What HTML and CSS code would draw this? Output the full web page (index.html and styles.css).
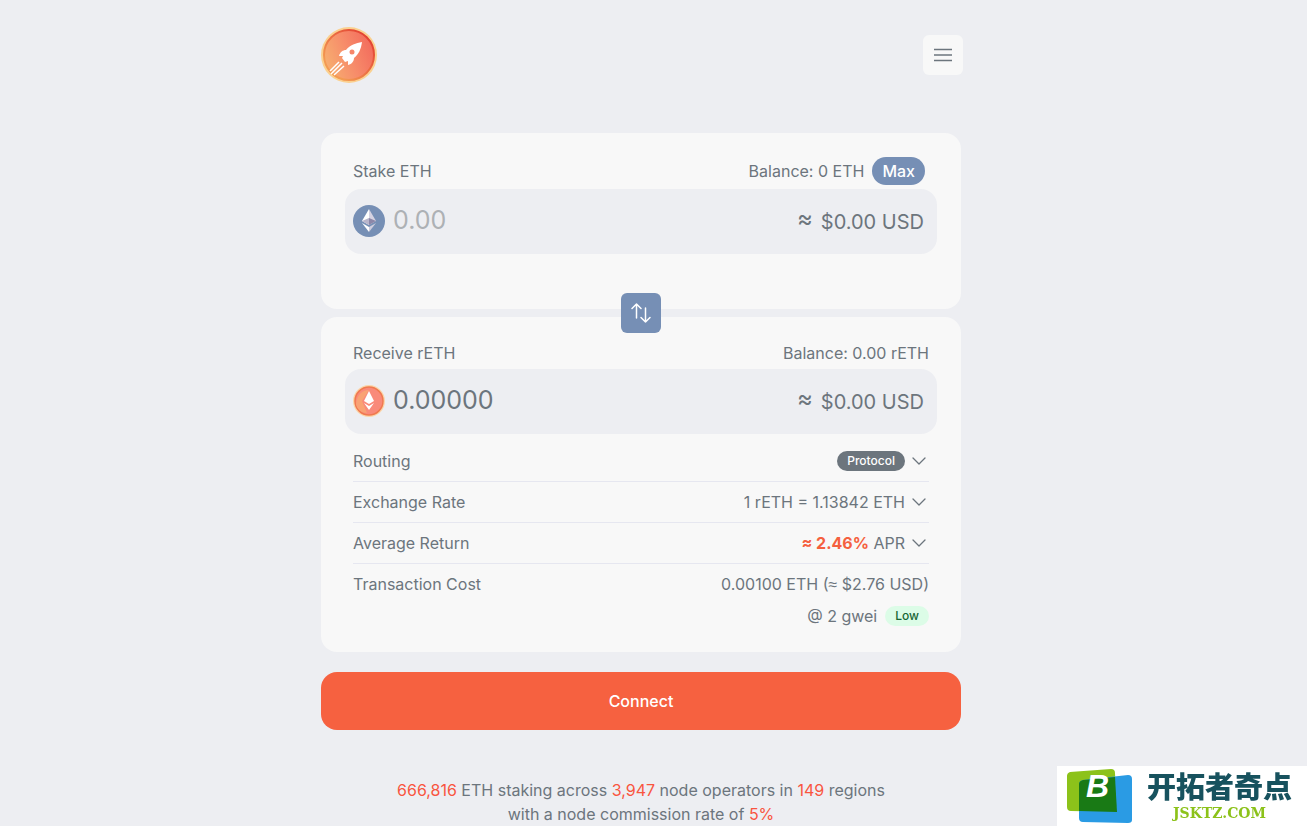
FILE: index.html
```html
<!DOCTYPE html>
<html lang="en">
<head>
    <meta charset="UTF-8">
    <meta name="viewport" content="width=device-width, initial-scale=1.0">
    <title>Stake ETH</title>
    <link rel="stylesheet" href="styles.css">
</head>
<body>
    <div class="page">
        <header class="header">
            <a href="#" class="logo" aria-label="Home">
                <svg width="56" height="56" viewBox="0 0 56 56">
                    <defs>
                        <linearGradient id="logo-fill" x1="0" y1="0.7" x2="1" y2="0.3">
                            <stop offset="0" stop-color="#f7b070"/>
                            <stop offset="0.5" stop-color="#f78c6a"/>
                            <stop offset="1" stop-color="#f26a5c"/>
                        </linearGradient>
                        <linearGradient id="logo-edge" x1="0" y1="1" x2="1" y2="0">
                            <stop offset="0.2" stop-color="#f39a52"/>
                            <stop offset="1" stop-color="#e0302c"/>
                        </linearGradient>
                    </defs>
                    <circle cx="28" cy="28" r="28" fill="#fbd08f"/>
                    <circle cx="28" cy="28" r="25" fill="url(#logo-fill)" stroke="url(#logo-edge)" stroke-width="2"/>
                    <path d="M41 15C35 16 29 18 25 23C22 23 19 25 18 29L22 29L21 31L24 35L27 34L27 38C31 37 33 34 33 31C38 27 40 22 41 15Z" fill="#fff"/>
                    <circle cx="31" cy="25" r="2.500" fill="#f6866a"/>
                    <path d="M18 35L9 44M21 36L10 47M23 39L13 48" stroke="#fff" stroke-width="1.500"/>
                </svg>
            </a>
            <button class="menu-button" aria-label="Menu">
                <svg width="20" height="20" viewBox="0 0 20 20" fill="none" stroke="#6c757d" stroke-width="1.500">
                    <path d="M1 4.500H19M1 10H19M1 15.500H19"/>
                </svg>
            </button>
        </header>

        <main>
            <div class="cards">
                <section class="card stake-card">
                    <div class="card-header">
                        <label for="stake">Stake ETH</label>
                        <div class="balance">
                            <span>Balance: 0 ETH</span>
                            <button class="max-button">Max</button>
                        </div>
                    </div>
                    <div class="amount-box">
                        <svg width="32" height="32" viewBox="0 0 32 32">
                            <circle cx="16" cy="16" r="16" fill="#768fb5"/>
                            <path d="M16 4L9 16L16 20Z" fill="#fff"/>
                            <path d="M16 4L23 16L16 20Z" fill="#d5d3e2"/>
                            <path d="M16 13L9 16L16 20Z" fill="#b9b5cb"/>
                            <path d="M16 13L23 16L16 20Z" fill="#8d87a8"/>
                            <path d="M9 18L16 22V27Z" fill="#fff"/>
                            <path d="M23 18L16 22V27Z" fill="#cfcddd"/>
                        </svg>
                        <input type="text" id="stake" class="amount-input" placeholder="0.00">
                        <span class="usd"><span class="usd-approx">≈</span> <span>$0.00 USD</span></span>
                    </div>
                </section>

                <section class="card">
                    <div class="card-header">
                        <label for="receive">Receive rETH</label>
                        <span>Balance: 0.00 rETH</span>
                    </div>
                    <div class="amount-box">
                        <svg width="32" height="32" viewBox="0 0 32 32">
                            <circle cx="16" cy="16" r="16" fill="#fbd5a8"/>
                            <circle cx="16" cy="16" r="14" fill="#f98a7a" stroke="#f0794f" stroke-width="1.500"/>
                            <path d="M3 19C4 9 10 5 16 5L9 16L14 28C8 28 4 24 3 19Z" fill="#f9a273"/>
                            <path d="M16 6L11 16L16 19L21 16Z" fill="#fff"/>
                            <path d="M11 18L16 21L21 18L16 25Z" fill="#fff"/>
                        </svg>
                        <input type="text" id="receive" class="amount-input" value="0.00000" readonly>
                        <span class="usd"><span class="usd-approx">≈</span> <span>$0.00 USD</span></span>
                    </div>

                    <div class="details">
                        <div class="row">
                            <span>Routing</span>
                            <button class="row-toggle">
                                <span class="badge protocol">Protocol</span>
                                <svg class="chevron" width="14" height="8" viewBox="0 0 14 8"><path d="M1 1L7 7L13 1"/></svg>
                            </button>
                        </div>
                        <div class="row">
                            <span>Exchange Rate</span>
                            <button class="row-toggle">
                                <span>1 rETH = 1.13842 ETH</span>
                                <svg class="chevron" width="14" height="8" viewBox="0 0 14 8"><path d="M1 1L7 7L13 1"/></svg>
                            </button>
                        </div>
                        <div class="row">
                            <span>Average Return</span>
                            <button class="row-toggle">
                                <span><b class="apr">≈ 2.46%</b> APR</span>
                                <svg class="chevron" width="14" height="8" viewBox="0 0 14 8"><path d="M1 1L7 7L13 1"/></svg>
                            </button>
                        </div>
                        <div class="row">
                            <span>Transaction Cost</span>
                            <span>0.00100 ETH (<span class="approx">≈</span> $2.76 USD)</span>
                        </div>
                        <div class="gas">
                            <span>@ 2 gwei</span>
                            <span class="badge low">Low</span>
                        </div>
                    </div>
                </section>

                <button class="swap-button" aria-label="Swap direction">
                    <svg width="20" height="20" viewBox="0 0 20 20" fill="none" stroke="#fff" stroke-width="1.500" stroke-linecap="round" stroke-linejoin="round">
                        <path d="M5.500 15V1M1 5.500L5.500 1L10 5.500"/>
                        <path d="M14.500 5V19M10 14.500L14.500 19L19 14.500"/>
                    </svg>
                </button>
            </div>

            <button class="connect-button">Connect</button>
        </main>

        <footer class="stats">
            <b>666,816</b> ETH staking across <b>3,947</b> node operators in <b>149</b> regions<br>
            with a node commission rate of <b>5%</b>
        </footer>
    </div>

    <div class="site-badge">
        <svg width="80" height="60" viewBox="0 0 80 60">
            <path d="M13 6L54 3Q58 3 58 7L60 46L14 45Q10 45 10 41V10Q10 7 13 6Z" fill="#8cc21a"/>
            <path d="M26 14L71 9Q75 9 75 13V54Q75 57 71 57L26 56Q22 56 22 52V18Q22 15 26 14Z" fill="#2a9be4"/>
            <path d="M26 14L58 11L60 46L22 45V18Q22 15 26 14Z" fill="#197a15"/>
            <text class="badge-letter" x="29" y="31">B</text>
        </svg>
        <div class="site-name">
            <span class="site-title" lang="zh">开拓者奇点</span>
            <span class="site-url">JSKTZ.COM</span>
        </div>
    </div>
</body>
</html>
```
FILE: styles.css
```css
*{
    box-sizing: border-box;
}

body{
    margin: 0;
    padding-right: 25px;
    background-color: #edeef2;
    color: #6c757d;
    font-family: Inter, "Noto Sans", sans-serif;
    font-size: 16px;
    line-height: 24px;
}

button, input{
    font: inherit;
    color: inherit;
    border: none;
    background: none;
    padding: 0;
}
button{
    cursor: pointer;
}
svg{
    display: block;
    flex-shrink: 0;
}

.page{
    max-width: 640px;
    margin: 0 auto;
    padding-top: 27px;
}

.header{
    display: flex;
    justify-content: space-between;
    align-items: center;
    margin-right: -2px;
    margin-bottom: 50px;
}
.menu-button{
    display: flex;
    align-items: center;
    justify-content: center;
    width: 40px;
    height: 40px;
    border-radius: 6px;
    background-color: #f8f8f8;
}

.cards{
    position: relative;
    display: grid;
    gap: 8px;
}
.card{
    padding: 24px;
    border-radius: 16px;
    background-color: #f8f8f8;
}
.stake-card{
    padding-bottom: 55px;
}
.card-header{
    display: flex;
    justify-content: space-between;
    align-items: center;
    padding: 0 8px;
    margin-bottom: 4px;
}
.balance{
    display: flex;
    align-items: center;
    gap: 8px;
    padding-right: 4px;
}
.max-button{
    padding: 2px 10px;
    border-radius: 14px;
    background-color: #768fb5;
    color: white;
    font-weight: 500;
}

.amount-box{
    display: flex;
    align-items: flex-start;
    gap: 8px;
    min-height: 65px;
    padding: 16px 13px 0 8px;
    border-radius: 16px;
    background-color: #edeef2;
}
.amount-input{
    flex: 1;
    min-width: 0;
    font-size: 25px;
    line-height: 30px;
    outline: none;
}
.amount-input::placeholder{
    color: #adb1b5;
    opacity: 1;
}
.usd{
    display: flex;
    gap: 8px;
    font-size: 20px;
    line-height: 34px;
}
.usd-approx{
    font-size: 24px;
    line-height: 28px;
}

.details{
    margin-top: 7px;
    padding: 0 8px;
}
.row{
    display: flex;
    justify-content: space-between;
    align-items: center;
    padding: 8px 0;
    border-bottom: 1px solid #e6e7f0;
}
.row:nth-child(4){
    border-bottom: none;
}
.row-toggle{
    display: flex;
    align-items: center;
    gap: 7px;
    padding-right: 3px;
}
.chevron{
    fill: none;
    stroke: #6c757d;
    stroke-width: 1.3;
    stroke-linecap: round;
    stroke-linejoin: round;
}
.apr{
    color: #f5603f;
    font-weight: 700;
}
.approx{
    font-family: "Liberation Sans", Arial, sans-serif;
    line-height: 1;
}
.badge{
    padding: 0 10px;
    border-radius: 10px;
    font-size: 12px;
    line-height: 20px;
    font-weight: 500;
}
.protocol{
    background-color: #6c757d;
    color: white;
}
.low{
    background-color: #dcfce7;
    color: #166534;
}
.gas{
    display: flex;
    justify-content: flex-end;
    align-items: center;
    gap: 8px;
}

.swap-button{
    position: absolute;
    top: 160px;
    left: 50%;
    transform: translateX(-50%);
    display: flex;
    align-items: center;
    justify-content: center;
    width: 40px;
    height: 40px;
    border-radius: 6px;
    background-color: #768fb5;
}

.connect-button{
    width: 100%;
    margin-top: 20px;
    padding: 17px;
    border-radius: 16px;
    background-color: #f66140;
    color: white;
    font-weight: 500;
}

.stats{
    margin-top: 48px;
    text-align: center;
}
.stats b{
    color: #f9553f;
    font-weight: 400;
}

.site-badge{
    position: fixed;
    right: 0;
    bottom: 0;
    display: flex;
    gap: 10px;
    width: 250px;
    height: 60px;
    background-color: white;
}
.badge-letter{
    font-family: "Liberation Sans", Arial, sans-serif;
    font-size: 32px;
    font-weight: bold;
    font-style: italic;
    fill: white;
}
.site-name{
    display: flex;
    flex-direction: column;
    align-items: center;
    padding-top: 2px;
}
.site-title{
    color: #17525e;
    font-family: "Noto Sans CJK SC", sans-serif;
    font-size: 29px;
    line-height: 34px;
    font-weight: 900;
}
.site-url{
    color: #8cc21a;
    font-family: "DejaVu Serif", serif;
    font-size: 14px;
    line-height: 22px;
    font-weight: bold;
}
```
